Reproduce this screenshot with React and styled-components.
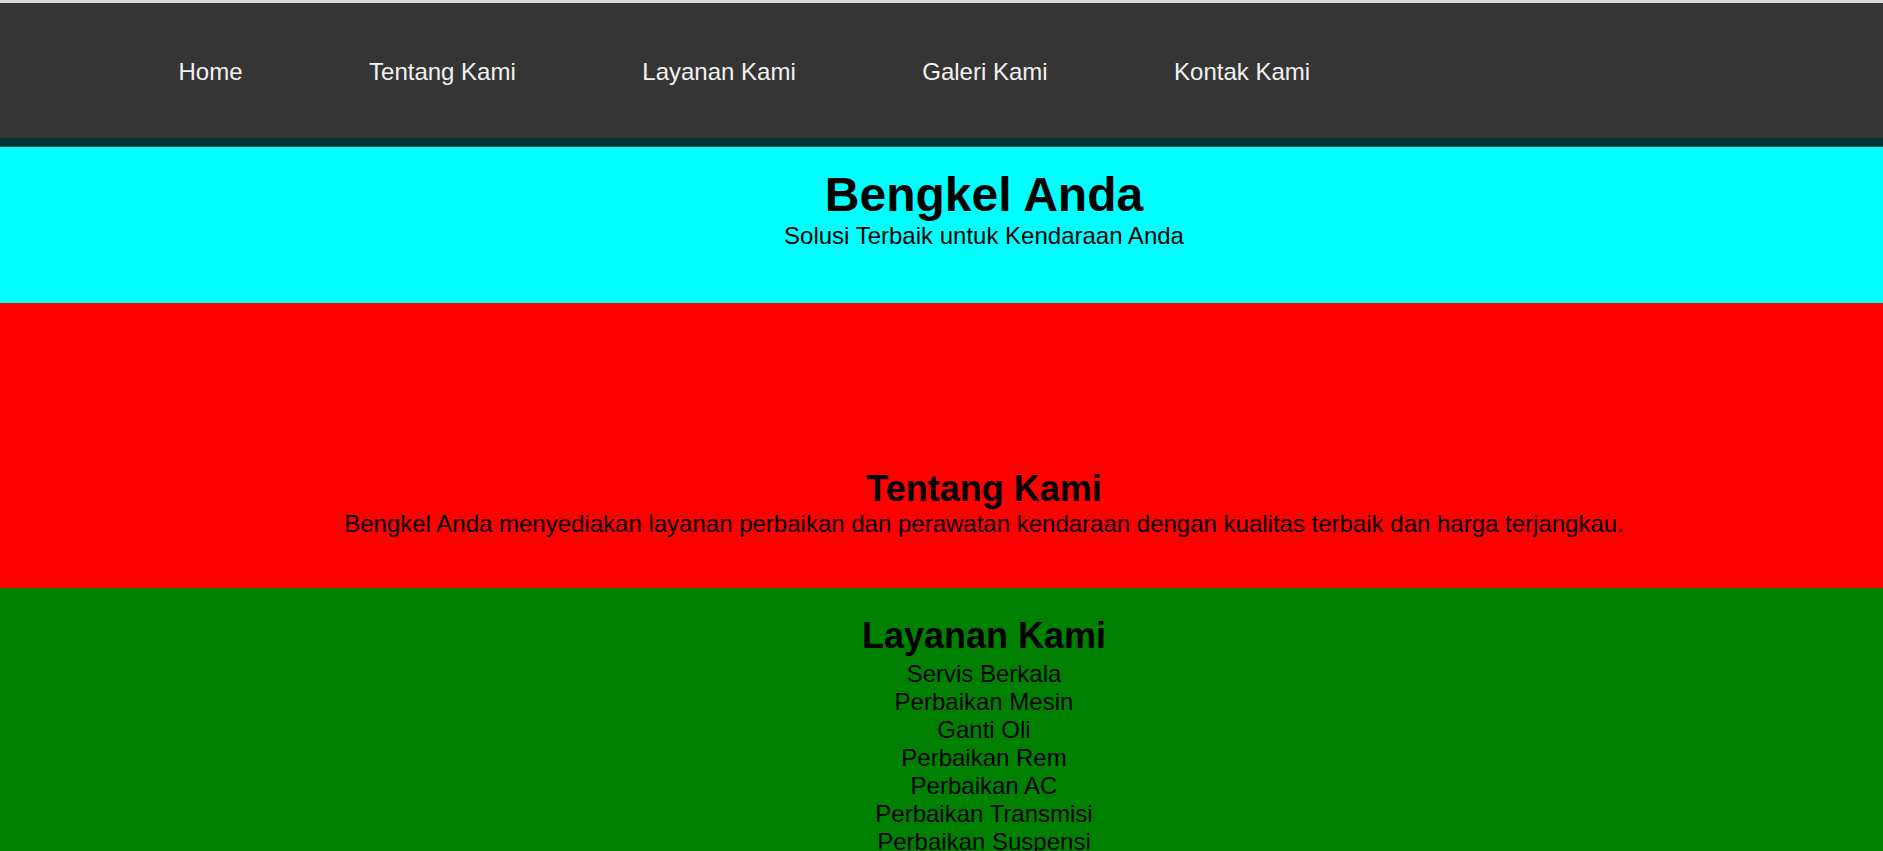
import React from "react";
import styled, { createGlobalStyle } from "styled-components";

const GlobalStyle = createGlobalStyle`
  body {
    margin: 0;
    background: #ffffff;
    font-family: "Liberation Sans", Arial, sans-serif;
    font-size: 24px;
    color: #000;
  }
`;

const TopStrip = styled.div`
  height: 3px;
  background: #d9d9d9;
`;

const NavBar = styled.nav`
  height: 135px;
  box-sizing: border-box;
  padding: 2px 0 0 178.5px;
  background: #353535;
  display: flex;
  align-items: center;
  gap: 126.5px;

  a {
    color: #f2f2f2;
    font-size: 24px;
    text-decoration: none;
  }
`;

const NavShadow = styled.div`
  height: 8px;
  background: #003333;
  border-bottom: 1px solid #5a4a3a;
`;

const Section = styled.section`
  background: ${(p) => p.$bg};
  padding: ${(p) => p.$pad};
  box-sizing: border-box;
  min-height: ${(p) => p.$minH || "0"};
  text-align: center;

  h1 {
    font-size: 48px;
    margin: 0;
  }

  h2 {
    font-size: 36px;
    margin: 0;
  }

  p {
    margin: 0;
  }
`;

const ServiceList = styled.ul`
  list-style: none;
  margin: 3px 0 0;
  padding: 0;

  li {
    line-height: 28px;
  }
`;

const links = ["Home", "Tentang Kami", "Layanan Kami", "Galeri Kami", "Kontak Kami"];

const services = [
  "Servis Berkala",
  "Perbaikan Mesin",
  "Ganti Oli",
  "Perbaikan Rem",
  "Perbaikan AC",
  "Perbaikan Transmisi",
  "Perbaikan Suspensi",
];

const App = () => {
  return (
    <>
      <GlobalStyle />
      <TopStrip />
      <NavBar>
        {links.map((l) => (
          <a key={l} href="#">
            {l}
          </a>
        ))}
      </NavBar>
      <NavShadow />
      <Section $bg="#00ffff" $pad="20px 0 0 85px" $minH="156px">
        <h1>Bengkel Anda</h1>
        <p>Solusi Terbaik untuk Kendaraan Anda</p>
      </Section>
      <Section $bg="#ff0000" $pad="165px 0 50px 85px">
        <h2>Tentang Kami</h2>
        <p>
          Bengkel Anda menyediakan layanan perbaikan dan perawatan kendaraan
          dengan kualitas terbaik dan harga terjangkau.
        </p>
      </Section>
      <Section $bg="#008000" $pad="27px 0 50px 85px">
        <h2>Layanan Kami</h2>
        <ServiceList>
          {services.map((s) => (
            <li key={s}>{s}</li>
          ))}
        </ServiceList>
      </Section>
    </>
  );
};

export default App;
